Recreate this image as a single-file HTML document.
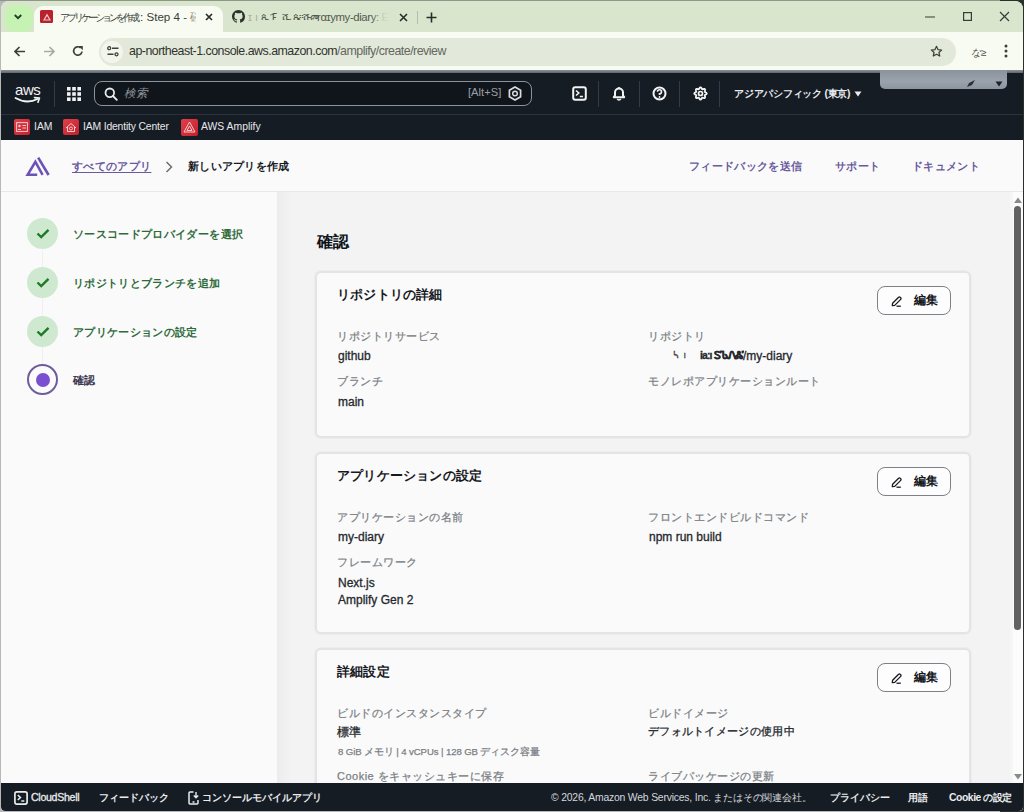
<!DOCTYPE html>
<html lang="ja">
<head>
<meta charset="utf-8">
<style>
*{box-sizing:border-box;margin:0;padding:0}
html,body{width:1024px;height:812px;overflow:hidden}
body{position:relative;background:#b8b8b8;font-family:"Liberation Sans",sans-serif;color:#16191f}
.a{position:absolute;white-space:nowrap}
/* chrome */
#win{position:absolute;left:1px;top:1px;width:1022px;height:810px;overflow:hidden;border-radius:8px 8px 4px 4px;background:#f4f4f4}
#tabs{position:absolute;left:0;top:0;width:1022px;height:32px;background:#d9e5cc}
#toolbar{position:absolute;left:0;top:31px;width:1022px;height:39px;background:#f7fbf1}
#gline{position:absolute;left:0;top:69px;width:1022px;height:3px;background:linear-gradient(180deg,#8c9298,#5f666e)}
#nav{position:absolute;left:0;top:72px;width:1022px;height:41px;background:#161c24}
#fav{position:absolute;left:0;top:113px;width:1022px;height:27px;background:#161c24;border-top:1px solid #2b323b}
#ahdr{position:absolute;left:0;top:139px;width:1022px;height:52px;background:#fafafa;border-bottom:1px solid #e8e8e8}
#lnav{position:absolute;left:0;top:191px;width:276px;height:592px;background:#fafafa}
#main{position:absolute;left:276px;top:191px;width:733px;height:592px;background:#f3f3f3}
#sb{position:absolute;left:1009px;top:191px;width:13px;height:592px;background:#fcfcfc}
#foot{position:absolute;left:0;top:782px;width:1022px;height:28px;background:#161c24;border-radius:0 0 4px 4px}
.card{position:absolute;left:38px;width:656px;background:#fafafa;border:2px solid #e4e4e4;box-shadow:0 0 0 1px #ededed;border-radius:6px}
.ct{position:absolute;white-space:nowrap;left:20px;font-weight:bold;font-size:13px;letter-spacing:0.2px;color:#16191f}
.lbl{position:absolute;white-space:nowrap;font-size:11px;letter-spacing:0.5px;color:#7b7f85;-webkit-text-stroke:0.25px #7b7f85}
.val{position:absolute;white-space:nowrap;font-size:12px;color:#25282d;-webkit-text-stroke:0.3px #25282d}
.btn{position:absolute;left:560px;width:74px;height:29px;border:1px solid #7d8087;border-radius:8px;background:#fdfdfd}
.btn span{position:absolute;left:36px;top:6px;font-weight:bold;font-size:11.5px;color:#16191f}
.btn svg{position:absolute;left:13px;top:9px}
.step{position:absolute;left:26px;height:31px;width:240px}
.ok{position:absolute;left:0;top:0;width:31px;height:31px;border-radius:50%;background:#cfe9d0}
.ok svg{position:absolute;left:9px;top:10px}
.cur{position:absolute;left:0;top:0;width:31px;height:31px;border-radius:50%;border:2px solid #6e5d9c;background:#fbfbfb}
.cur div{position:absolute;left:6.5px;top:6.5px;width:14px;height:14px;border-radius:50%;background:#7a4fd0}
.st{position:absolute;left:46px;top:9px;font-size:11px;letter-spacing:0.35px;font-weight:bold;color:#2f6b3a}
</style>
</head>
<body>
<div style="position:absolute;left:0;top:0;width:1024px;height:1px;background:#8d978a"></div>
<div style="position:absolute;left:1000px;top:0;width:24px;height:812px;background:#2b302b"></div>
<div id="win">
  <div id="tabs">
    <div class="a" style="left:3.5px;top:4px;width:28.5px;height:27px;background:#c6f2b3;border-radius:9px"></div>
    <svg class="a" style="left:12px;top:12px" width="10" height="8" viewBox="0 0 10 8"><path d="M1.8 2 L5 5.2 L8.2 2" fill="none" stroke="#1f421f" stroke-width="1.9"/></svg>
    <div class="a" style="left:33px;top:5px;width:189px;height:28px;background:#f7fbf1;border-radius:9px 9px 0 0"></div>
    <div class="a" style="left:39px;top:9px;width:13px;height:13px;background:#b9222d;border-radius:1.5px"></div>
    <svg class="a" style="left:40px;top:10px" width="12" height="12" viewBox="0 0 12 12"><path d="M6 2.5 L10 9.5 L2 9.5 Z M6 5 L4 8.5 L8 8.5 Z" fill="#f7c5c5" fill-rule="evenodd"/></svg>
    <div class="a" style="left:59px;top:9px;font-size:11.6px;color:#3a3d38;width:136px;overflow:hidden"><span style="font-size:10.4px;letter-spacing:-3px">アプリケーションを作</span><span style="font-size:10.4px">成</span>: Step 4 - 確認</div>
    <div class="a" style="left:183px;top:8px;width:18px;height:18px;background:linear-gradient(90deg,rgba(247,251,241,0),#f7fbf1)"></div>
    <svg class="a" style="left:204px;top:12px" width="8" height="8" viewBox="0 0 8 8"><path d="M1 1 L7 7 M7 1 L1 7" stroke="#2a2c28" stroke-width="1.7"/></svg>
    <svg class="a" style="left:231px;top:9px" width="13" height="13" viewBox="0 0 16 16"><path fill="#2d302c" d="M8 0C3.58 0 0 3.58 0 8c0 3.54 2.29 6.53 5.47 7.59.4.07.55-.17.55-.38 0-.19-.01-.82-.01-1.49-2.01.37-2.53-.49-2.69-.94-.09-.23-.48-.94-.82-1.13-.28-.15-.68-.52-.01-.53.63-.01 1.08.58 1.23.82.72 1.21 1.87.87 2.33.66.07-.52.28-.87.51-1.07-1.78-.2-3.64-.89-3.64-3.95 0-.87.31-1.59.82-2.15-.08-.2-.36-1.02.08-2.12 0 0 .67-.21 2.2.82.64-.18 1.32-.27 2-.27.68 0 1.36.09 2 .27 1.53-1.04 2.2-.82 2.2-.82.44 1.1.16 1.92.08 2.12.51.56.82 1.27.82 2.15 0 3.07-1.87 3.75-3.65 3.95.29.25.54.73.54 1.48 0 1.07-.01 1.93-.01 2.2 0 .21.15.46.55.38A8.013 8.013 0 0016 8c0-4.42-3.58-8-8-8z"/></svg>
    <div class="a" style="left:247px;top:10px;font-size:11px;color:#a9ada4">ɪ ı</div>
    <div class="a" style="left:260px;top:10px;font-size:10px;color:#55584f;letter-spacing:-1px">ጲ ፑ</div>
    <div class="a" style="left:281px;top:10px;font-size:10px;color:#55584f;letter-spacing:-1px">ሺ. ጴ።ሹመ</div>
    <div class="a" style="left:316px;top:10px;font-size:11.4px;color:#55584f;letter-spacing:-0.4px">rαɪymy-diary: <span style="color:#9da198">E</span></div>
    <div class="a" style="left:370px;top:8px;width:18px;height:18px;background:linear-gradient(90deg,rgba(217,229,204,0),#d9e5cc)"></div>
    <svg class="a" style="left:398px;top:12px" width="9" height="9" viewBox="0 0 9 9"><path d="M1 1 L8 8 M8 1 L1 8" stroke="#2a2c28" stroke-width="1.6"/></svg>
    <div class="a" style="left:416px;top:10px;width:1px;height:13px;background:#b5bdb0"></div>
    <svg class="a" style="left:425px;top:11px" width="11" height="11" viewBox="0 0 11 11"><path d="M5.5 0.5 V10.5 M0.5 5.5 H10.5" stroke="#2a2c28" stroke-width="1.6"/></svg>
    <svg class="a" style="left:924px;top:15px" width="10" height="2" viewBox="0 0 10 2"><path d="M0 1 H10" stroke="#3a3c38" stroke-width="1.2"/></svg>
    <svg class="a" style="left:962px;top:11px" width="9" height="9" viewBox="0 0 9 9"><rect x="0.6" y="0.6" width="7.8" height="7.8" fill="none" stroke="#3a3c38" stroke-width="1.2"/></svg>
    <svg class="a" style="left:998px;top:10px" width="11" height="11" viewBox="0 0 11 11"><path d="M1 1 L10 10 M10 1 L1 10" stroke="#3a3c38" stroke-width="1.2"/></svg>
  </div>
  <div id="toolbar">
    <svg class="a" style="left:13px;top:14px" width="12" height="11" viewBox="0 0 12 11"><path d="M11 5.5 H1.5 M5.5 1 L1 5.5 L5.5 10" fill="none" stroke="#3d403a" stroke-width="1.7"/></svg>
    <svg class="a" style="left:42px;top:14px" width="12" height="11" viewBox="0 0 12 11"><path d="M1 5.5 H10.5 M6.5 1 L11 5.5 L6.5 10" fill="none" stroke="#a8aca4" stroke-width="1.7"/></svg>
    <svg class="a" style="left:71px;top:13px" width="12" height="12" viewBox="0 0 12 12"><path d="M10 6.5 A4.2 4.2 0 1 1 8.6 2.8" fill="none" stroke="#3d403a" stroke-width="1.7"/><path d="M6.5 1 L10.8 1 L10.8 5.3 Z" fill="#3d403a"/></svg>
    <div class="a" style="left:98px;top:6px;width:857px;height:28px;background:#e3e9da;border-radius:14px"></div>
    <div class="a" style="left:100px;top:9px;width:22px;height:22px;background:#f2f5ec;border-radius:11px"></div>
    <svg class="a" style="left:106px;top:14px" width="12" height="11" viewBox="0 0 12 11"><circle cx="2.2" cy="2.2" r="1.5" fill="none" stroke="#3d403a" stroke-width="1.3"/><path d="M5 2.2 H11.5 M0.5 8.3 H6.5" stroke="#3d403a" stroke-width="1.5"/><circle cx="9.5" cy="8.3" r="1.5" fill="none" stroke="#3d403a" stroke-width="1.3"/></svg>
    <div class="a" style="left:128px;top:12px;font-size:12.4px;color:#2f322d;letter-spacing:-0.5px">ap-northeast-1.console.aws.amazon.com<span style="color:#62665e">/amplify/create/review</span></div>
    <svg class="a" style="left:929px;top:13px" width="13" height="13" viewBox="0 0 24 24"><path d="M12 2.5 L14.9 8.6 L21.5 9.3 L16.5 13.8 L18 20.4 L12 17 L6 20.4 L7.5 13.8 L2.5 9.3 L9.1 8.6 Z" fill="none" stroke="#3d403a" stroke-width="2.3" stroke-linejoin="round"/></svg>
    <div class="a" style="left:970px;top:14px;font-size:10px;color:#4a4d47;font-style:italic">な≥</div>
    <svg class="a" style="left:1003px;top:12px" width="4" height="14" viewBox="0 0 4 14"><circle cx="2" cy="2" r="1.5" fill="#3d403a"/><circle cx="2" cy="7" r="1.5" fill="#3d403a"/><circle cx="2" cy="12" r="1.5" fill="#3d403a"/></svg>
  </div>
  <div id="gline"></div>
  <div id="nav">
    <div class="a" style="left:14px;top:8px;font-size:15px;color:#f2f3f3;letter-spacing:-0.4px">aws</div>
    <svg class="a" style="left:13px;top:23px" width="28" height="9" viewBox="0 0 28 9"><path d="M1.5 2 Q13 8.5 23.5 3" fill="none" stroke="#f2f3f3" stroke-width="1.8" stroke-linecap="round"/><path d="M20.5 1.6 L25.5 2 L24 6.3" fill="none" stroke="#f2f3f3" stroke-width="1.6" stroke-linecap="round" stroke-linejoin="round"/></svg>
    <div class="a" style="left:53px;top:8px;width:1px;height:26px;background:#343b44"></div>
    <svg class="a" style="left:66px;top:14px" width="14" height="14" viewBox="0 0 14 14" fill="#f2f3f3"><rect x="0" y="0" width="3.6" height="3.6"/><rect x="5.2" y="0" width="3.6" height="3.6"/><rect x="10.4" y="0" width="3.6" height="3.6"/><rect x="0" y="5.2" width="3.6" height="3.6"/><rect x="5.2" y="5.2" width="3.6" height="3.6"/><rect x="10.4" y="5.2" width="3.6" height="3.6"/><rect x="0" y="10.4" width="3.6" height="3.6"/><rect x="5.2" y="10.4" width="3.6" height="3.6"/><rect x="10.4" y="10.4" width="3.6" height="3.6"/></svg>
    <div class="a" style="left:93px;top:8px;width:438px;height:25px;border:1.6px solid #8d939a;border-radius:8px;background:#10151b"></div>
    <svg class="a" style="left:103px;top:14px" width="14" height="14" viewBox="0 0 14 14"><circle cx="5.8" cy="5.8" r="4.3" fill="none" stroke="#e6e8ea" stroke-width="1.8"/><path d="M9 9 L12.8 12.8" stroke="#e6e8ea" stroke-width="1.9" stroke-linecap="round"/></svg>
    <div class="a" style="left:123px;top:13px;font-size:11.5px;color:#8f959c;font-style:italic">検索</div>
    <div class="a" style="left:467px;top:13px;font-size:11.2px;color:#9aa0a6">[Alt+S]</div>
    <svg class="a" style="left:507px;top:13px" width="14" height="15" viewBox="0 0 14 15"><path d="M7 1 L12.6 4.2 L12.6 10.8 L7 14 L1.4 10.8 L1.4 4.2 Z" fill="none" stroke="#d9dcdf" stroke-width="1.7"/><circle cx="7" cy="7.5" r="2.3" fill="none" stroke="#d9dcdf" stroke-width="1.5"/></svg>
    <svg class="a" style="left:571px;top:13px" width="15" height="15" viewBox="0 0 15 15"><rect x="1.2" y="1.2" width="12.6" height="12.6" rx="2" fill="none" stroke="#f2f3f3" stroke-width="2"/><path d="M4 4.5 L6.8 7 L4 9.5" fill="none" stroke="#f2f3f3" stroke-width="1.6"/><path d="M7.8 10.5 H11" stroke="#f2f3f3" stroke-width="1.6"/></svg>
    <div class="a" style="left:597px;top:8px;width:1px;height:26px;background:#343b44"></div>
    <svg class="a" style="left:611px;top:13px" width="14" height="15" viewBox="0 0 14 15"><path d="M1.8 11.2 L3 9.5 V6.5 A4 4 0 0 1 11 6.5 V9.5 L12.2 11.2 Z" fill="none" stroke="#f2f3f3" stroke-width="2" stroke-linejoin="round"/><path d="M5.3 12.8 A1.8 1.8 0 0 0 8.7 12.8" fill="none" stroke="#f2f3f3" stroke-width="1.6"/><path d="M7 1 V2.5" stroke="#f2f3f3" stroke-width="1.6"/></svg>
    <div class="a" style="left:638px;top:8px;width:1px;height:26px;background:#343b44"></div>
    <svg class="a" style="left:651px;top:13px" width="15" height="15" viewBox="0 0 15 15"><circle cx="7.5" cy="7.5" r="6" fill="none" stroke="#f2f3f3" stroke-width="2"/><path d="M5.5 5.8 A2 2 0 1 1 7.5 7.8 V9" fill="none" stroke="#f2f3f3" stroke-width="1.6"/><circle cx="7.5" cy="11" r="0.9" fill="#f2f3f3"/></svg>
    <div class="a" style="left:678px;top:8px;width:1px;height:26px;background:#343b44"></div>
    <svg class="a" style="left:692px;top:13px" width="15" height="15" viewBox="0 0 15 15"><path d="M13.70 7.50 L13.63 7.80 L13.44 8.08 L13.14 8.34 L12.80 8.55 L12.44 8.74 L12.13 8.90 L11.89 9.07 L11.75 9.26 L11.71 9.49 L11.76 9.78 L11.87 10.12 L11.99 10.50 L12.08 10.90 L12.11 11.28 L12.05 11.62 L11.88 11.88 L11.62 12.05 L11.28 12.11 L10.90 12.08 L10.50 11.99 L10.12 11.87 L9.78 11.76 L9.49 11.71 L9.26 11.75 L9.07 11.89 L8.90 12.13 L8.74 12.44 L8.55 12.80 L8.34 13.14 L8.08 13.44 L7.80 13.63 L7.50 13.70 L7.20 13.63 L6.92 13.44 L6.66 13.14 L6.45 12.80 L6.26 12.44 L6.10 12.13 L5.93 11.89 L5.74 11.75 L5.51 11.71 L5.22 11.76 L4.88 11.87 L4.50 11.99 L4.10 12.08 L3.72 12.11 L3.38 12.05 L3.12 11.88 L2.95 11.62 L2.89 11.28 L2.92 10.90 L3.01 10.50 L3.13 10.12 L3.24 9.78 L3.29 9.49 L3.25 9.26 L3.11 9.07 L2.87 8.90 L2.56 8.74 L2.20 8.55 L1.86 8.34 L1.56 8.08 L1.37 7.80 L1.30 7.50 L1.37 7.20 L1.56 6.92 L1.86 6.66 L2.20 6.45 L2.56 6.26 L2.87 6.10 L3.11 5.93 L3.25 5.74 L3.29 5.51 L3.24 5.22 L3.13 4.88 L3.01 4.50 L2.92 4.10 L2.89 3.72 L2.95 3.38 L3.12 3.12 L3.38 2.95 L3.72 2.89 L4.10 2.92 L4.50 3.01 L4.88 3.13 L5.22 3.24 L5.51 3.29 L5.74 3.25 L5.93 3.11 L6.10 2.87 L6.26 2.56 L6.45 2.20 L6.66 1.86 L6.92 1.56 L7.20 1.37 L7.50 1.30 L7.80 1.37 L8.08 1.56 L8.34 1.86 L8.55 2.20 L8.74 2.56 L8.90 2.87 L9.07 3.11 L9.26 3.25 L9.49 3.29 L9.78 3.24 L10.12 3.13 L10.50 3.01 L10.90 2.92 L11.28 2.89 L11.62 2.95 L11.88 3.12 L12.05 3.38 L12.11 3.72 L12.08 4.10 L11.99 4.50 L11.87 4.88 L11.76 5.22 L11.71 5.51 L11.75 5.74 L11.89 5.93 L12.13 6.10 L12.44 6.26 L12.80 6.45 L13.14 6.66 L13.44 6.92 L13.63 7.20 Z" fill="none" stroke="#f2f3f3" stroke-width="1.8" stroke-linejoin="round"/><circle cx="7.5" cy="7.5" r="2" fill="none" stroke="#f2f3f3" stroke-width="1.7"/></svg>
    <div class="a" style="left:718px;top:8px;width:1px;height:26px;background:#343b44"></div>
    <div class="a" style="left:733px;top:14px;font-size:10.4px;color:#e9ebed;font-weight:bold;letter-spacing:-0.25px">アジアパシフィック (東京)</div>
    <svg class="a" style="left:853px;top:18px" width="8" height="6" viewBox="0 0 8 6"><path d="M0.5 0.5 H7.5 L4 5.5 Z" fill="#e9ebed"/></svg>
    <div class="a" style="left:879px;top:-3px;width:127px;height:19px;background:linear-gradient(180deg,#8a929c,#9aa2ab 60%,#8c949d);border-radius:0 0 5px 5px;filter:blur(0.6px)"></div>
    <svg class="a" style="left:994px;top:8px" width="8" height="6" viewBox="0 0 8 6"><path d="M0.5 0.5 H7.5 L4 5.5 Z" fill="#1d232b"/></svg>
    <svg class="a" style="left:965px;top:6px" width="10" height="9" viewBox="0 0 10 9"><path d="M1 8 L3 4 L9 1 L6 6 Z" fill="#2a3038"/></svg>
  </div>
  <div id="fav">
    <div class="a" style="left:13px;top:4px;width:16px;height:16px;background:linear-gradient(135deg,#e0404a,#c4202c);border-radius:2px"></div>
    <svg class="a" style="left:15px;top:7px" width="12" height="10" viewBox="0 0 12 10"><rect x="0.6" y="0.6" width="10.8" height="8.8" fill="none" stroke="#f7c9cb" stroke-width="1"/><circle cx="3.5" cy="4" r="1.2" fill="#f7c9cb"/><path d="M6.5 3.5 H10 M6.5 6 H10 M2 7.5 H5" stroke="#f7c9cb" stroke-width="1"/></svg>
    <div class="a" style="left:33px;top:6px;font-size:10.4px;color:#e6e8ea">IAM</div>
    <div class="a" style="left:62px;top:4px;width:16px;height:16px;background:linear-gradient(135deg,#e0404a,#c4202c);border-radius:2px"></div>
    <svg class="a" style="left:64px;top:6px" width="12" height="12" viewBox="0 0 12 12"><path d="M1 7 L6 2.5 L11 7 M2.5 6 V10.5 H9.5 V6" fill="none" stroke="#f7c9cb" stroke-width="1"/><circle cx="6" cy="7.5" r="1.5" fill="none" stroke="#f7c9cb" stroke-width="0.9"/></svg>
    <div class="a" style="left:82px;top:6px;font-size:10.4px;color:#e6e8ea;letter-spacing:-0.17px">IAM Identity Center</div>
    <div class="a" style="left:180px;top:4px;width:17px;height:17px;background:linear-gradient(135deg,#e0404a,#c4202c);border-radius:2px"></div>
    <svg class="a" style="left:182px;top:6px" width="13" height="12" viewBox="0 0 13 12"><path d="M6.5 1 L12 11 H1 Z M6.5 5 L4 9.5 H9 Z" fill="none" stroke="#f7c9cb" stroke-width="1"/></svg>
    <div class="a" style="left:200px;top:6px;font-size:10.4px;color:#e6e8ea">AWS Amplify</div>
  </div>
  <div id="ahdr">
    <svg class="a" style="left:24px;top:15px" width="26" height="23" viewBox="25 155 26 23"><path d="M37.2 174.8 H27.6 L35.4 161.8 L42.6 174.8" fill="none" stroke="#6d52b8" stroke-width="2.5" stroke-linejoin="miter"/><path d="M38.2 157.6 L48.6 175" fill="none" stroke="#6d52b8" stroke-width="2.6"/></svg>
    <div class="a" style="left:71px;top:19px;font-size:11px;letter-spacing:0.35px;color:#6a5b9e;font-weight:bold;text-decoration:underline;text-underline-offset:2px">すべてのアプリ</div>
    <svg class="a" style="left:164px;top:21px" width="8" height="12" viewBox="0 0 8 12"><path d="M1.5 1 L6.5 6 L1.5 11" fill="none" stroke="#6b6f75" stroke-width="1.5"/></svg>
    <div class="a" style="left:187px;top:19px;font-size:11px;letter-spacing:0.3px;color:#16191f;font-weight:bold">新しいアプリを作成</div>
    <div class="a" style="left:688px;top:19px;font-size:11px;letter-spacing:0.35px;color:#6a5b9e;font-weight:bold">フィードバックを送信</div>
    <div class="a" style="left:834px;top:19px;font-size:11px;letter-spacing:0.35px;color:#6a5b9e;font-weight:bold">サポート</div>
    <div class="a" style="left:911px;top:19px;font-size:11px;letter-spacing:0.35px;color:#6a5b9e;font-weight:bold">ドキュメント</div>
  </div>
  <div id="lnav">
    <div class="a" style="left:41px;top:58px;width:1px;height:145px;background:#f0f0f0"></div>
    <div class="step" style="top:26px"><div class="ok"><svg width="14" height="11" viewBox="0 0 14 11"><path d="M1.5 5.5 L5.2 9 L12.5 1.8" fill="none" stroke="#1d7b28" stroke-width="2.4"/></svg></div><span class="st">ソースコードプロバイダーを選択</span></div>
    <div class="step" style="top:75px"><div class="ok"><svg width="14" height="11" viewBox="0 0 14 11"><path d="M1.5 5.5 L5.2 9 L12.5 1.8" fill="none" stroke="#1d7b28" stroke-width="2.4"/></svg></div><span class="st">リポジトリとブランチを追加</span></div>
    <div class="step" style="top:124px"><div class="ok"><svg width="14" height="11" viewBox="0 0 14 11"><path d="M1.5 5.5 L5.2 9 L12.5 1.8" fill="none" stroke="#1d7b28" stroke-width="2.4"/></svg></div><span class="st">アプリケーションの設定</span></div>
    <div class="step" style="top:172px"><div class="cur"><div></div></div><span class="st" style="color:#3b3651">確認</span></div>
  </div>
  <div id="main">
    <div class="a" style="left:39.5px;top:39.5px;font-size:16px;font-weight:bold;color:#0f141a">確認</div>
    <div class="card" style="top:79px;height:167px">
      <div class="ct" style="top:13px">リポジトリの詳細</div>
      <div class="btn" style="top:13px"><svg width="11" height="11" viewBox="0 0 11 11"><path d="M1.3 9.7 L1.6 7.3 L7.6 1.3 A1.1 1.1 0 0 1 9.2 1.3 L9.7 1.8 A1.1 1.1 0 0 1 9.7 3.4 L3.7 9.4 Z" fill="none" stroke="#16191f" stroke-width="1.3" stroke-linejoin="round"/><path d="M5.5 10.2 H9.8" stroke="#16191f" stroke-width="1.3"/></svg><span>編集</span></div>
      <div class="lbl" style="left:20px;top:56px">リポジトリサービス</div>
      <div class="val" style="left:21px;top:76px">github</div>
      <div class="lbl" style="left:20px;top:101px">ブランチ</div>
      <div class="val" style="left:21px;top:122px">main</div>
      <div class="lbl" style="left:331px;top:56px">リポジトリ</div>
      <div class="val" style="left:356px;top:77px;font-size:9px;color:#666;letter-spacing:-0.5px">ᓴ &nbsp; ı</div>
      <div class="val" style="left:383px;top:76px;font-size:10.5px;font-weight:bold;color:#2a2a2a;letter-spacing:-0.9px;width:44px;overflow:hidden">iaːı ᏚᏖᏁᏜᏖ</div>
      <div class="val" style="left:426px;top:76px">/my-diary</div>
      <div class="lbl" style="left:331px;top:101px">モノレポアプリケーションルート</div>
    </div>
    <div class="card" style="top:260px;height:182px">
      <div class="ct" style="top:13px">アプリケーションの設定</div>
      <div class="btn" style="top:13px"><svg width="11" height="11" viewBox="0 0 11 11"><path d="M1.3 9.7 L1.6 7.3 L7.6 1.3 A1.1 1.1 0 0 1 9.2 1.3 L9.7 1.8 A1.1 1.1 0 0 1 9.7 3.4 L3.7 9.4 Z" fill="none" stroke="#16191f" stroke-width="1.3" stroke-linejoin="round"/><path d="M5.5 10.2 H9.8" stroke="#16191f" stroke-width="1.3"/></svg><span>編集</span></div>
      <div class="lbl" style="left:20px;top:56px">アプリケーションの名前</div>
      <div class="val" style="left:21px;top:76px">my-diary</div>
      <div class="lbl" style="left:20px;top:101px">フレームワーク</div>
      <div class="val" style="left:21px;top:122px">Next.js</div>
      <div class="val" style="left:21px;top:139px">Amplify Gen 2</div>
      <div class="lbl" style="left:331px;top:56px">フロントエンドビルドコマンド</div>
      <div class="val" style="left:332px;top:76px">npm run build</div>
    </div>
    <div class="card" style="top:456px;height:200px">
      <div class="ct" style="top:13px">詳細設定</div>
      <div class="btn" style="top:13px"><svg width="11" height="11" viewBox="0 0 11 11"><path d="M1.3 9.7 L1.6 7.3 L7.6 1.3 A1.1 1.1 0 0 1 9.2 1.3 L9.7 1.8 A1.1 1.1 0 0 1 9.7 3.4 L3.7 9.4 Z" fill="none" stroke="#16191f" stroke-width="1.3" stroke-linejoin="round"/><path d="M5.5 10.2 H9.8" stroke="#16191f" stroke-width="1.3"/></svg><span>編集</span></div>
      <div class="lbl" style="left:20px;top:56px">ビルドのインスタンスタイプ</div>
      <div class="val" style="left:20px;top:74px">標準</div>
      <div class="lbl" style="left:21px;top:96px;font-size:9.6px;letter-spacing:-0.1px">8 GiB メモリ | 4 vCPUs | 128 GB ディスク容量</div>
      <div class="lbl" style="left:20px;top:119px">Cookie をキャッシュキーに保存</div>
      <div class="lbl" style="left:331px;top:56px">ビルドイメージ</div>
      <div class="val" style="left:331px;top:74px;font-size:11px;letter-spacing:0.3px">デフォルトイメージの使用中</div>
      <div class="lbl" style="left:331px;top:119px">ライブパッケージの更新</div>
    </div>
    <div class="a" style="left:0;top:0;width:14px;height:592px;background:linear-gradient(90deg,#ececec,#f3f3f3)"></div>
  </div>
  <div id="sb">
    <div class="a" style="left:0;top:0;width:3px;height:592px;background:#f6f6f6"></div>
    <svg class="a" style="left:4px;top:5px" width="8" height="6" viewBox="0 0 8 6"><path d="M0 6 L4 0.5 L8 6 Z" fill="#8a8a8a"/></svg>
    <div class="a" style="left:3.5px;top:14px;width:7.5px;height:424px;background:#636363;border-radius:4px"></div>
    <svg class="a" style="left:4px;top:582px" width="8" height="6" viewBox="0 0 8 6"><path d="M0 0 L4 5.5 L8 0 Z" fill="#8a8a8a"/></svg>
  </div>
  <div id="foot">
    <svg class="a" style="left:13px;top:8px" width="14" height="14" viewBox="0 0 14 14"><rect x="0.9" y="0.9" width="12.2" height="12.2" rx="2" fill="none" stroke="#e9ebed" stroke-width="1.7"/><path d="M3.8 4 L6.4 6.5 L3.8 9" fill="none" stroke="#e9ebed" stroke-width="1.6"/><path d="M7.3 10 H10.3" stroke="#e9ebed" stroke-width="1.6"/></svg>
    <div class="a" style="left:30px;top:8px;font-size:10.6px;color:#e9ebed;letter-spacing:-0.3px;-webkit-text-stroke:0.3px #e9ebed">CloudShell</div>
    <div class="a" style="left:98px;top:8px;font-size:10.4px;font-weight:bold;color:#e9ebed">フィードバック</div>
    <svg class="a" style="left:187px;top:8px" width="12" height="14" viewBox="0 0 12 14"><path d="M5.5 1 H2 A1 1 0 0 0 1 2 V12 A1 1 0 0 0 2 13 H9 A1 1 0 0 0 10 12 V9" fill="none" stroke="#e9ebed" stroke-width="1.5"/><path d="M8 1 V6.5 M5.8 4.5 L8 6.7 L10.2 4.5" fill="none" stroke="#e9ebed" stroke-width="1.4"/><path d="M4.5 11 H6.5" stroke="#e9ebed" stroke-width="1.3"/></svg>
    <div class="a" style="left:201px;top:8px;font-size:10.4px;font-weight:bold;color:#e9ebed">コンソールモバイルアプリ</div>
    <div class="a" style="left:550px;top:8px;font-size:10.4px;color:#d5d8dc;letter-spacing:-0.2px">© 2026, Amazon Web Services, Inc. またはその関連会社。</div>
    <div class="a" style="left:829px;top:8px;font-size:10.4px;font-weight:bold;color:#e9ebed">プライバシー</div>
    <div class="a" style="left:907px;top:8px;font-size:10.4px;font-weight:bold;color:#e9ebed">用語</div>
    <div class="a" style="left:948px;top:8px;font-size:10.4px;font-weight:bold;color:#e9ebed;letter-spacing:-0.45px">Cookie の設定</div>
  </div>
</div>
</body>
</html>
